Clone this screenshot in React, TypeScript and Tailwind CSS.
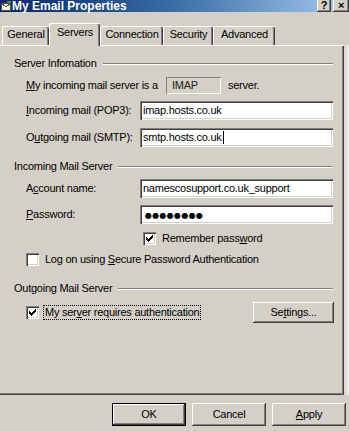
import React from "react";

const raised =
  "bg-[#d4d0c8] shadow-[inset_-1px_-1px_#404040,inset_1px_1px_#ffffff,inset_-2px_-2px_#808080,inset_2px_2px_#d4d0c8]";
const sunken =
  "shadow-[inset_1px_1px_#808080,inset_2px_2px_#404040,inset_-1px_-1px_#ffffff,inset_-2px_-2px_#d4d0c8]";

function Check() {
  const px: [number, number][] = [
    [6, 0],
    [5, 1], [6, 1],
    [0, 2], [4, 2], [5, 2], [6, 2],
    [0, 3], [1, 3], [3, 3], [4, 3], [5, 3],
    [0, 4], [1, 4], [2, 4], [3, 4], [4, 4],
    [1, 5], [2, 5], [3, 5],
    [2, 6],
  ];
  return (
    <svg width="7" height="7" viewBox="0 0 7 7" shapeRendering="crispEdges">
      {px.map(([x, y], i) => (
        <rect key={i} x={x} y={y} width="1" height="1" fill="#000" />
      ))}
    </svg>
  );
}

function CheckBox({ checked }: { checked?: boolean }) {
  return (
    <div className={`w-[13px] h-[13px] bg-white flex items-center justify-center shrink-0 ${sunken}`}>
      {checked && <Check />}
    </div>
  );
}

function GroupHeader({ label, top }: { label: string; top: string }) {
  return (
    <div className={`flex items-center h-[13px] pl-[14px] pr-[11px] ${top}`}>
      <span className="whitespace-nowrap">{label}</span>
      <div className="flex-1 ml-[6px] h-[2px] border-t border-t-[#808080] border-b border-b-white" />
    </div>
  );
}

function Field({ label, value, top, caret }: { label: React.ReactNode; value: React.ReactNode; top: string; caret?: boolean }) {
  return (
    <div className={`flex items-center h-[19px] pl-[26px] pr-[11px] ${top}`}>
      <div className="w-[114px] whitespace-nowrap">{label}</div>
      <div className={`flex-1 h-[19px] bg-white flex items-center pl-[3px] ${sunken}`}>
        <span className="whitespace-nowrap">{value}</span>
        {caret && <span className="w-[1px] h-[13px] bg-black ml-[1px]" />}
      </div>
    </div>
  );
}

function Tab({ label, w, selected }: { label: string; w: string; selected?: boolean }) {
  return (
    <div
      className={`${w} flex items-start justify-center bg-[#d4d0c8] border-l border-l-white border-t border-t-white rounded-tl-[2px] rounded-tr-[2px] shadow-[inset_-1px_0_#404040,inset_-2px_0_#808080] ${
        selected ? "h-[23px] mb-[-1px] relative z-10 pt-[1px]" : "h-[19px] pt-[0px]"
      }`}
    >
      <span className="leading-[14px]">{label}</span>
    </div>
  );
}

export default function App() {
  return (
    <div className="w-[349px] h-[431px] bg-[#d4d0c8] text-[11px] tracking-[-0.25px] text-black font-['Liberation_Sans',Arial,sans-serif] overflow-hidden flex flex-col">
      {/* Title bar */}
      <div className="h-[12px] bg-linear-to-r from-[#0a246a] via-[#3a6ea5] to-[#a6caf0] flex items-center">
        <div className="w-[11px] h-[12px] flex items-center justify-center">
          <svg width="10" height="10" viewBox="0 0 10 10" shapeRendering="crispEdges">
            <rect x="0.5" y="2.5" width="9" height="7" fill="#f4f0d8" stroke="#555" />
            <path d="M0.5 2.5 L5 6 L9.5 2.5" fill="none" stroke="#555" />
            <rect x="6" y="0" width="4" height="2" fill="#4a8f3a" />
          </svg>
        </div>
        <span className="ml-[1px] font-bold text-[12px] leading-[12px] tracking-normal text-white whitespace-nowrap">My Email Properties</span>
        <div className="flex-1" />
        <div className={`w-[14px] h-[14px] mt-[-2px] flex items-end justify-center pb-[1px] ${raised}`}>
          <span className="font-bold text-[11px] leading-[11px]">?</span>
        </div>
        <div className={`w-[16px] h-[14px] mt-[-2px] ml-[2px] flex items-end justify-center pb-[1px] ${raised}`}>
          <span className="font-bold text-[11px] leading-[11px]">×</span>
        </div>
      </div>

      {/* Tabs */}
      <div className="h-[33px] flex items-end pl-[2px]">
        <Tab label="General" w="w-[47px]" />
        <Tab label="Servers" w="w-[51px]" selected />
        <Tab label="Connection" w="w-[63px]" />
        <Tab label="Security" w="w-[50px]" />
        <Tab label="Advanced" w="w-[62px]" />
      </div>

      {/* Panel + right strip */}
      <div className="flex">
        <div className="w-[344px] h-[350px] border-t border-t-white shadow-[inset_-1px_0_#404040,inset_-2px_0_#808080,inset_0_-1px_#404040,inset_0_-2px_#808080] flex flex-col">
          <GroupHeader label="Server Infomation" top="mt-[11px]" />

          <div className="flex items-center h-[17px] pl-[26px] mt-[7px]">
            <span className="whitespace-nowrap w-[140px]">
              <u>M</u>y incoming mail server is a
            </span>
            <div className="w-[55px] h-[17px] flex items-center pl-[6px] text-[#222] shadow-[inset_1px_1px_#808080,inset_-1px_-1px_#ffffff]">
              IMAP
            </div>
            <span className="ml-[7px]">server.</span>
          </div>

          <Field
            top="mt-[7px]"
            label={
              <>
                <u>I</u>ncoming mail (POP3):
              </>
            }
            value="imap.hosts.co.uk"
          />
          <Field
            top="mt-[8px]"
            label={
              <>
                O<u>u</u>tgoing mail (SMTP):
              </>
            }
            value="smtp.hosts.co.uk"
            caret
          />

          <GroupHeader label="Incoming Mail Server" top="mt-[13px]" />

          <Field
            top="mt-[6px]"
            label={
              <>
                A<u>c</u>count name:
              </>
            }
            value="namescosupport.co.uk_support"
          />
          <Field
            top="mt-[7px]"
            label={
              <>
                <u>P</u>assword:
              </>
            }
            value={<span className="font-['DejaVu_Sans',sans-serif] text-[8px] tracking-[0.3px] pl-[2px]">●●●●●●●●</span>}
          />

          <div className="flex items-center h-[13px] pl-[143px] mt-[8px]">
            <CheckBox checked />
            <span className="ml-[6px] whitespace-nowrap">
              Remember pass<u>w</u>ord
            </span>
          </div>

          <div className="flex items-center h-[13px] pl-[26px] mt-[8px]">
            <CheckBox />
            <span className="ml-[6px] whitespace-nowrap">
              Log on using <u>S</u>ecure Password Authentication
            </span>
          </div>

          <GroupHeader label="Outgoing Mail Server" top="mt-[16px]" />

          <div className="flex items-center h-[21px] pl-[26px] pr-[10px] mt-[7px]">
            <CheckBox checked />
            <span className="ml-[4px] px-[1px] border border-dotted border-black whitespace-nowrap leading-[13px]">
              My ser<u>v</u>er requires authentication
            </span>
            <div className="flex-1" />
            <div className={`w-[81px] h-[21px] flex items-center justify-center ${raised}`}>
              Se<u>t</u>tings...
            </div>
          </div>
        </div>
        <div className="flex-1 h-[350px] bg-[#dedbd4] border-r-2 border-r-[#eeece8]" />
      </div>

      {/* Bottom buttons */}
      <div className="flex justify-end gap-[6px] pr-[3px] mt-[8px]">
        <div className="w-[74px] h-[23px] border border-black flex items-center justify-center bg-[#d4d0c8] shadow-[inset_-1px_-1px_#404040,inset_1px_1px_#ffffff,inset_-2px_-2px_#808080]">
          OK
        </div>
        <div className={`w-[74px] h-[23px] flex items-center justify-center ${raised}`}>Cancel</div>
        <div className={`w-[74px] h-[23px] flex items-center justify-center ${raised}`}>
          <u>A</u>pply
        </div>
      </div>
    </div>
  );
}
